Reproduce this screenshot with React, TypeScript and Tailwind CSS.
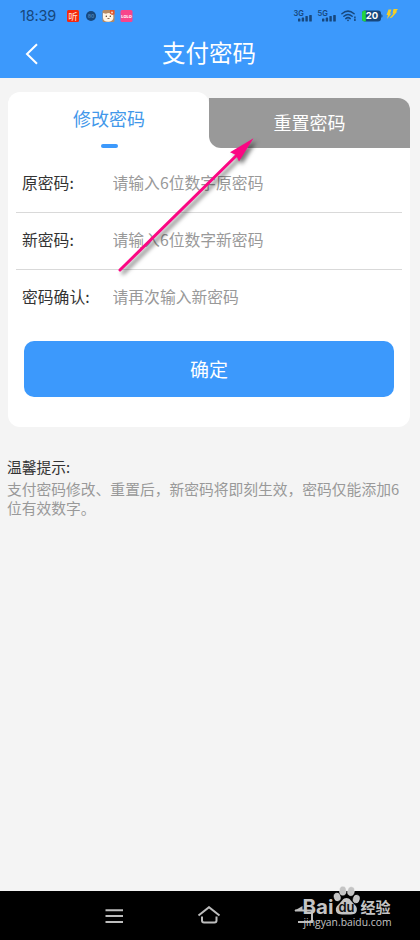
import { useState } from "react";

type Tab = "modify" | "reset";

const fields = [
  { label: "原密码:", placeholder: "请输入6位数字原密码", row: "h-[58px] border-b pb-px" },
  { label: "新密码:", placeholder: "请输入6位数字新密码", row: "h-[57px] border-b pb-[2px]" },
  { label: "密码确认:", placeholder: "请再次输入新密码", row: "h-[54px] pb-px" },
];

const Signal = ({ label }: { label: string }) => (
  <svg width="21" height="14" viewBox="0 0 21 14" fill="#17477c">
    <text x="0.5" y="6.5" fontSize="7.5" fontWeight="600" fontFamily="Inter, sans-serif">
      {label}
    </text>
    <rect x="5" y="9.5" width="2.4" height="3" rx="0.6" />
    <rect x="8.7" y="8.5" width="2.4" height="4" rx="0.6" />
    <rect x="12.4" y="7" width="2.4" height="5.5" rx="0.6" />
    <rect x="16.2" y="6" width="2.6" height="6.5" rx="0.6" />
  </svg>
);

const StatusBar = () => (
  <div className="flex h-[31px] items-center pl-5 pr-[21px] text-[#17477c]">
    <span className="w-[47px] pt-px font-[Inter] text-[14.5px] leading-none tracking-[-0.2px]">18:39</span>
    {/* Notification icons */}
    <svg width="67" height="12" viewBox="0 0 67 12">
      <rect width="12" height="12" rx="1.5" fill="#f5290e" />
      <text x="6" y="9.5" fontSize="9.5" textAnchor="middle" fontFamily="Noto Sans CJK SC, sans-serif" fill="#ffe3dc">
        听
      </text>
      <circle cx="24" cy="6" r="5" fill="#17477c" />
      <text x="24" y="8" fontSize="5" fontWeight="700" textAnchor="middle" fontFamily="Inter, sans-serif" fill="#4a82ba">
        80
      </text>
      <rect x="35.5" width="12" height="12" rx="1.5" fill="#b58a63" />
      <path d="M36 3l3 .7q2.5-1.5 5 0l2-1 .4 5.2q-1 3.8-5.2 3.8-5 0-5.2-4z" fill="#fff4e4" />
      <path d="M43 0h4.5v4.2L45 5l-2-1.5z" fill="#e4542c" />
      <circle cx="45" cy="2.5" r="1" fill="#f6d9c0" />
      <circle cx="39.3" cy="6.3" r="0.7" fill="#4b3526" />
      <circle cx="43.3" cy="6.3" r="0.7" fill="#4b3526" />
      <path d="M40.5 8.5h2" stroke="#6b4a33" strokeWidth="0.8" />
      <rect x="53.5" width="12" height="12" rx="1.5" fill="#f8448b" />
      <text x="59.5" y="7.8" fontSize="4" fontWeight="800" textAnchor="middle" fontFamily="Inter, sans-serif" fill="#fff">
        LOLO
      </text>
    </svg>
    <div className="ml-auto flex items-center">
      <div className="flex gap-[3px]">
        <Signal label="3G" />
        <Signal label="5G" />
      </div>
      <svg className="ml-[3px]" width="16" height="12" viewBox="0 0 16 12" fill="none" stroke="#17477c">
        <path d="M.9 3.8Q7-1.5 13.1 3.8M2.9 6.3Q7 2.7 11.1 6.3M4.8 8.6Q7 6.7 9.2 8.6" strokeWidth="1.5" strokeLinecap="round" />
        <circle cx="7" cy="10.3" r="0.9" fill="#17477c" stroke="none" />
        <path d="M13.9 6.5v4.5" strokeWidth="1.5" strokeDasharray="2 .5" />
      </svg>
      <svg className="ml-[4px]" width="22" height="12" viewBox="0 0 22 12">
        <rect x="1" y="0.5" width="19" height="11" rx="3" fill="#17477c" />
        <path d="M4.8.5H4a3 3 0 0 0-3 3v5a3 3 0 0 0 3 3h.8z" fill="#22d53f" />
        <path d="M20.3 4.3q1.2.2 1.2 1.7t-1.2 1.7z" fill="#17477c" />
        <text x="11" y="9.4" fontSize="9.5" fontWeight="700" textAnchor="middle" fontFamily="Inter, sans-serif" fill="#fff">
          20
        </text>
      </svg>
      <svg className="mb-[2px] ml-[3px]" width="13" height="11" viewBox="0 0 13 11" fill="#f4ce25">
        <path d="M2.5.5h3L4 4.500h1.500L1 10l1-4H.5zM7.500 0H12l-2 2.500h1.300L6 8.600l-2.600.7L7.500 4.500l-1-.3z" />
      </svg>
    </div>
  </div>
);

const Arrow = () => (
  <svg
    className="pointer-events-none absolute left-[110px] top-[130px] drop-shadow-[3px_3px_2px_rgba(0,0,0,0.55)]"
    width="155"
    height="150"
    viewBox="110 130 155 150"
  >
    <path d="M120 270L238 154" stroke="#fb0783" strokeWidth="3" strokeLinecap="round" />
    <path d="M253.5 138.3L230 152.3L236 155L239 161.5Z" fill="#fb0783" />
  </svg>
);

const Watermark = () => (
  <svg
    className="pointer-events-none absolute bottom-0 right-[20px]"
    width="100"
    height="60"
    viewBox="300 880 100 60"
    fill="#c4c4c4"
  >
    <text x="302.5" y="913.5" fontSize="19.5" fontWeight="700" textLength="31" lengthAdjust="spacingAndGlyphs" fontFamily="Inter, sans-serif">
      Bai
    </text>
    <g stroke="#f4f4f4" strokeWidth="0.4">
      <ellipse cx="337.2" cy="897" rx="3.1" ry="4" transform="rotate(-15 337.2 897)" />
      <ellipse cx="342.8" cy="890.8" rx="3.4" ry="4.5" />
      <ellipse cx="351" cy="891.2" rx="3.4" ry="4.5" transform="rotate(10 351 891.2)" />
      <ellipse cx="356.3" cy="899" rx="3.1" ry="4" transform="rotate(15 356.3 899)" />
    </g>
    <path d="M346.5 898c3.5 0 4.3 3 7 5.5 2.6 2.3 3.8 4 3.3 7-.6 3.8-3.5 4-10.3 4s-10-.2-10.6-4c-.5-3 1-4.700 3.600-7 2.700-2.500 3.500-5.500 7-5.500z" />
    <text x="346.5" y="912" fontSize="13" fontWeight="600" textAnchor="middle" fontFamily="Inter, sans-serif" fill="#111">
      du
    </text>
    <text x="360.5" y="912.5" fontSize="15" fontWeight="700" fontFamily="Noto Sans CJK SC, sans-serif">
      经验
    </text>
    <text x="303.5" y="925.5" fontSize="10.5" textLength="88" lengthAdjust="spacingAndGlyphs" fontFamily="Open Sans, sans-serif">
      jingyan.baidu.com
    </text>
  </svg>
);

const App = () => {
  const [activeTab, setActiveTab] = useState<Tab>("modify");

  return (
    <div className="relative flex h-[940px] w-[420px] flex-col overflow-hidden bg-[#f4f4f4] font-['Noto_Sans_CJK_SC',sans-serif]">
      {/* Header */}
      <header className="h-[78px] shrink-0 bg-[#3c99fc]">
        <StatusBar />
        <div className="grid h-[46px] grid-cols-[60px_1fr_62px] items-center">
          <button className="pl-[25px]" aria-label="返回">
            <svg width="13" height="22" viewBox="0 0 13 22" fill="none" stroke="#fff" strokeWidth="2">
              <path d="M12 1.3L2 11l10 9.7" />
            </svg>
          </button>
          <h1 className="pb-[2px] text-center text-[23.5px] leading-none text-white">支付密码</h1>
        </div>
      </header>

      {/* Form card */}
      <main className="ml-2 mr-[10px] mt-[14px] h-[335px] shrink-0">
        <div className="flex h-[56px] items-end bg-[linear-gradient(#f4f4f4_20px,#fff_20px)]">
          <button
            onClick={() => setActiveTab("modify")}
            className="flex h-full w-[201px] flex-col items-center rounded-t-xl bg-white pl-px pt-[17px] text-[18px] leading-[18px] text-[#4298ea]"
          >
            修改密码
            {activeTab === "modify" && <span className="mt-[17px] h-[4px] w-[17px] rounded-full bg-[#3c99fc]" />}
          </button>
          <button
            onClick={() => setActiveTab("reset")}
            className="h-[50px] w-[201px] rounded-bl-xl rounded-tr-xl bg-[#999] pb-[2px] text-[18px] leading-none text-white"
          >
            重置密码
          </button>
        </div>
        <div className="h-[279px] rounded-b-xl bg-white px-2 pt-[7px]">
          {fields.map((field) => (
            <label key={field.label} className={`flex items-center border-[#d9d9d9] px-[6px] ${field.row}`}>
              <span className="w-[90.5px] text-[15.8px] leading-none text-[#333]">{field.label}</span>
              <input
                className="min-w-0 flex-1 bg-transparent pb-px text-[15.8px] leading-none outline-none placeholder:text-[#999]"
                placeholder={field.placeholder}
              />
            </label>
          ))}
          <button className="ml-2 mt-[17px] h-[56px] w-[370px] rounded-[10px] bg-[#3c99fc] pb-[2px] text-[19px] leading-none text-white">
            确定
          </button>
        </div>
      </main>

      {/* Tips */}
      <section className="mt-[30px] flex-1 pl-[7px] pr-3 text-[14.78px] leading-[19px]">
        <h2 className="mb-[3px] text-[#333]">温馨提示:</h2>
        <p className="text-[#999]">支付密码修改、重置后，新密码将即刻生效，密码仅能添加6位有效数字。</p>
      </section>

      {/* System navigation */}
      <nav className="flex h-[49px] shrink-0 items-center bg-black pl-[105px]">
        <svg width="215" height="20" viewBox="105 906 215 20" fill="none" stroke="#bdbdbd" strokeWidth="2">
          <path d="M105.5 910.3h17.5M105.5 916.1h17.5M105.5 922h17.5" />
          <path d="M198.5 915.5l10.5-8.3 10.5 8.3M202 916.5v4q0 2 2 2h10.5q2 0 2-2v-4" />
          <path d="M295 910.5H312v11.5H298" />
          <path d="M294 911l8.5-5v5z" fill="#bdbdbd" stroke="none" />
        </svg>
      </nav>

      <Arrow />
      <Watermark />
    </div>
  );
};

export default App;
